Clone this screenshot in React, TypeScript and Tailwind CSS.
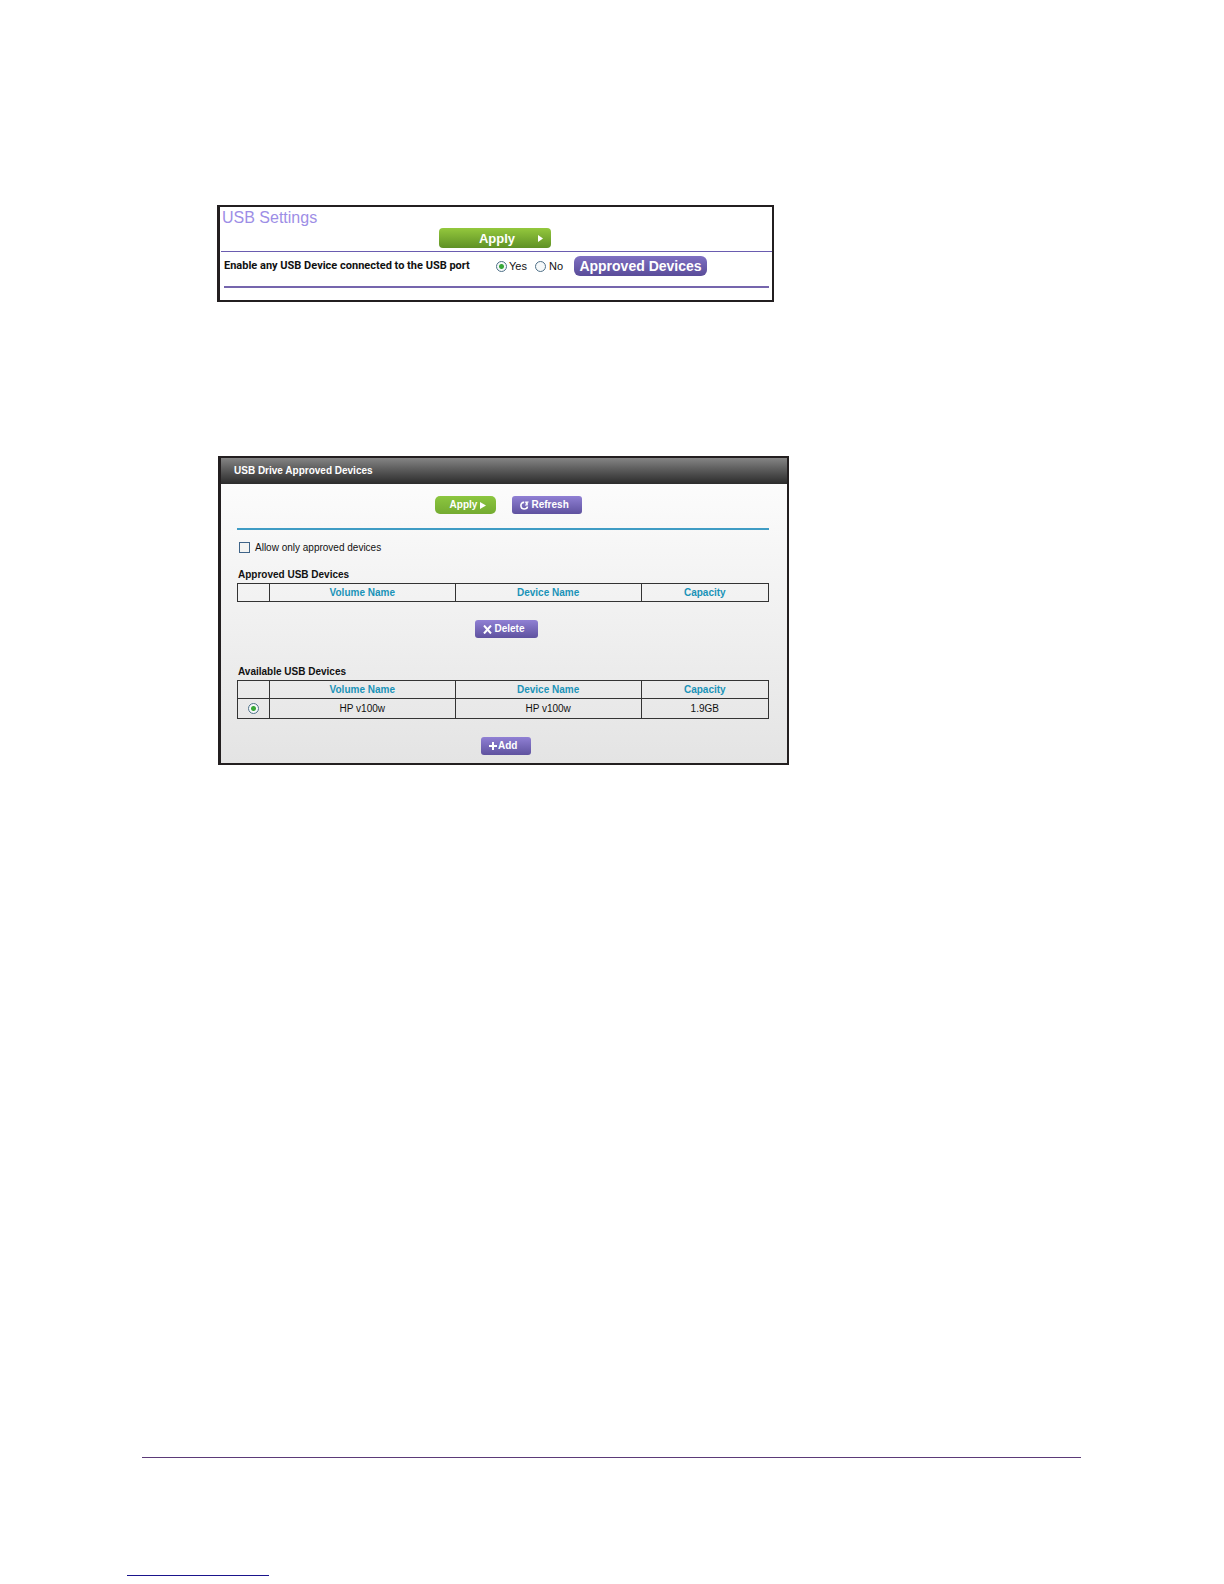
import type { ReactNode } from "react";

const purple =
  "flex h-[18px] items-center rounded-[3px] bg-linear-to-b from-[#9080d4] to-[#5f529f] pl-2 text-[10px] font-bold leading-none text-white";

function PlayIcon({ className }: { className: string }) {
  return (
    <svg viewBox="0 0 6 8" preserveAspectRatio="none" className={className} fill="currentColor" aria-hidden="true">
      <path d="M0 0 L6 4 L0 8 Z" />
    </svg>
  );
}

function RefreshIcon() {
  return (
    <svg viewBox="0 0 9 9" className="h-[9px] w-[9px]" fill="none" aria-hidden="true">
      <path d="M4.2 1.4 C2 1.2 0.9 2.8 0.9 4.6 C0.9 6.6 2.2 8 4.2 8 C6.2 8 7.4 7 7.4 5.4" stroke="white" strokeWidth="1.6" />
      <path d="M5.2 0.4 H8.6 V1.6 H7.8 V4.4 H5 V3.4 H6.4 L5.2 1.8 Z" fill="white" />
    </svg>
  );
}

function CrossIcon() {
  return (
    <svg viewBox="0 0 9 9" className="h-[9px] w-[9px]" fill="none" aria-hidden="true">
      <path d="M1 0.5 L8 8.5 M8 0.5 L1 8.5" stroke="white" strokeWidth="2" />
    </svg>
  );
}

function PlusIcon() {
  return (
    <svg viewBox="0 0 8 8" className="h-2 w-2" fill="none" aria-hidden="true">
      <path d="M4 0 V8 M0 4 H8" stroke="white" strokeWidth="2" />
    </svg>
  );
}

const radio =
  "m-0 block h-[11px] w-[11px] shrink-0 appearance-none rounded-full border border-[#4f7088] bg-[#f6f9fa] checked:bg-[radial-gradient(circle,#38a838_0px,#38a838_2px,#f6f9fa_3px)]";

function DeviceTable({ label, children }: { label: string; children?: ReactNode }) {
  const head = "h-[18px] border border-[#333] p-0 text-center font-bold text-[#1a93b8]";
  return (
    <table
      aria-label={label}
      className="w-full table-fixed border-collapse border border-[#222] text-[10px] leading-[16px]"
    >
      <colgroup>
        <col className="w-[6%]" />
        <col className="w-[35%]" />
        <col className="w-[35%]" />
        <col className="w-[24%]" />
      </colgroup>
      <thead>
        <tr>
          <th className={head}></th>
          <th className={head}>Volume Name</th>
          <th className={head}>Device Name</th>
          <th className={head}>Capacity</th>
        </tr>
      </thead>
      {children}
    </table>
  );
}

export default function App() {
  const cell = "h-5 border border-[#333] p-0 text-center";
  const heading = "pl-px text-[10px] font-bold leading-4";
  return (
    <div className="flex min-h-screen flex-col bg-white pb-2 font-['Liberation_Sans',Arial,sans-serif] text-[#111]">
      <main className="px-[217px] pt-[205px]">
        <section className="w-full max-w-[557px] border-2 border-l-3 border-[#231f20] bg-white pb-3">
          <h1 className="px-0.5 pt-px text-[16px] leading-5 text-[#9d8ee6]">USB Settings</h1>
          <div className="flex justify-center pb-[3px] pr-0.5">
            <button className="flex h-5 w-28 items-center justify-end rounded-[4px] bg-linear-to-b from-[#94c83d] to-[#5f9125] pr-2 text-[13px] font-bold leading-none text-white">
              <span className="pr-[23px]">Apply</span>
              <PlayIcon className="h-[7px] w-[5px]" />
            </button>
          </div>
          <div className="ml-px h-px bg-[#6a5cb0]" />
          <div className="ml-1 mr-[3px] flex items-center border-b-2 border-[#7565ad] pb-[10px] pt-1">
            <span className="w-[272px] whitespace-nowrap font-['Roboto',sans-serif] text-[11px] font-bold">
              Enable any USB Device connected to the USB port
            </span>
            <label className="flex w-[39px] items-center gap-[2px] text-[11px]">
              <input type="radio" name="enable" defaultChecked className={radio} />
              Yes
            </label>
            <label className="flex w-[39px] items-center gap-[3px] text-[11px]">
              <input type="radio" name="enable" className={radio} />
              No
            </label>
            <button className="h-5 w-[133px] whitespace-nowrap rounded-[6px] bg-linear-to-b from-[#7f70c2] to-[#5a4c99] text-[14px] font-bold leading-none text-white">
              Approved Devices
            </button>
          </div>
        </section>

        <section className="ml-px mt-[154px] w-full max-w-[571px] border-2 border-l-3 border-[#231f20] bg-linear-to-b from-[#fefefe] to-[#e4e4e4]">
          <h2 className="bg-linear-to-b from-[#858585] to-[#2c2c2c] px-[13px] text-[10px] font-bold leading-[26px] text-white">
            USB Drive Approved Devices
          </h2>
          <div className="pb-2 pl-4 pr-[18px] pt-3">
            <div className="flex justify-center gap-4 pb-[14px] pl-[10px]">
              <button className="flex h-[18px] w-[61px] items-center justify-center gap-[3px] rounded-[5px] bg-linear-to-b from-[#8cc63f] to-[#74ab31] pl-[6px] text-[10px] font-bold leading-none text-white">
                Apply
                <PlayIcon className="h-[7px] w-[6px]" />
              </button>
              <button className={`${purple} w-[70px] gap-[3px]`}>
                <RefreshIcon />
                Refresh
              </button>
            </div>
            <div className="h-[2px] bg-[#3f9cc4]" />
            <label className="mt-[9px] flex h-4 items-center gap-[5px] pl-[2px] text-[10px]">
              <input
                type="checkbox"
                className="m-0 h-[11px] w-[11px] appearance-none border border-[#3f6488] bg-[#f4f4f2] checked:bg-[#38a838]"
              />
              Allow only approved devices
            </label>
            <h3 className={`${heading} mt-3`}>Approved USB Devices</h3>
            <DeviceTable label="Approved USB Devices" />
            <div className="flex justify-center py-[18px] pl-[6px]">
              <button className={`${purple} w-[63px] gap-[3px]`}>
                <CrossIcon />
                Delete
              </button>
            </div>
            <h3 className={`${heading} mt-2`}>Available USB Devices</h3>
            <DeviceTable label="Available USB Devices">
              <tbody>
                <tr>
                  <td className={cell}>
                    <span className="flex justify-center">
                      <input type="radio" name="device" aria-label="HP v100w" defaultChecked className={radio} />
                    </span>
                  </td>
                  <td className={cell}>HP v100w</td>
                  <td className={cell}>HP v100w</td>
                  <td className={cell}>1.9GB</td>
                </tr>
              </tbody>
            </DeviceTable>
            <div className="flex justify-center pl-[6px] pt-[18px]">
              <button className={`${purple} w-[50px] gap-px`}>
                <PlusIcon />
                Add
              </button>
            </div>
          </div>
        </section>
      </main>
      <footer className="mt-auto">
        <div className="ml-[142px] mr-[143px] h-px bg-[#5b3a78]" />
        <div className="ml-[127px] mt-[117px] h-px w-[142px] bg-[#1a148c]" />
      </footer>
    </div>
  );
}
